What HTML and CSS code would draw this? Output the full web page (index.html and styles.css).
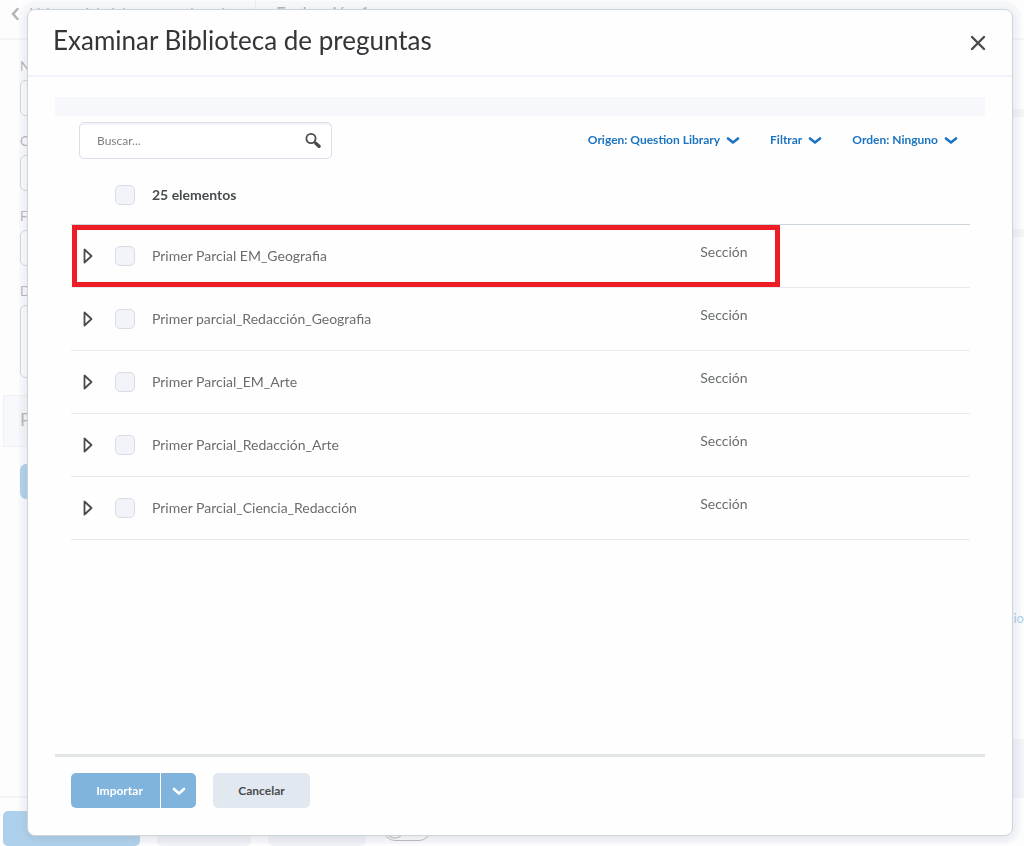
FILE: index.html
```html
<!DOCTYPE html>
<html lang="es">

<head>
    <meta charset="UTF-8">
    <meta name="viewport" content="width=device-width, initial-scale=1.0">
    <title>Examinar Biblioteca de preguntas</title>
    <link rel="stylesheet" href="styles.css">
</head>

<body>
    <!-- page behind the dialog -->
    <div class="page" inert>
        <header class="topbar">
            <a class="back" href="#">
                <svg width="8" height="16" viewBox="0 0 8 16"><path d="M6.500 3 2 8l4.500 5" fill="none" stroke="currentColor" stroke-width="2.500" stroke-linecap="round" /></svg>
                <span>Volver a Administrar cuestionarios</span>
            </a>
            <span class="topbar-title">Evaluación 1</span>
        </header>
        <div class="columns">
            <form class="form">
                <label for="f1">Nombre</label>
                <input id="f1" type="text">
                <label for="f2">Calificación</label>
                <input id="f2" type="text">
                <label for="f3">Fecha</label>
                <input id="f3" type="text">
                <label for="f4">Descripción</label>
                <textarea id="f4"></textarea>
                <h2>Preguntas</h2>
                <button class="add" type="button" aria-label="Agregar"></button>
            </form>
            <aside class="side">
                <div class="side-card small"></div>
                <div class="side-card medium"></div>
                <div class="side-card large"><a href="#">cio</a></div>
                <div class="side-end"></div>
            </aside>
        </div>
        <footer class="bottombar">
            <button class="save" type="button" aria-label="Guardar y cerrar"></button>
            <button class="plain" type="button" aria-label="Guardar"></button>
            <button class="plain wide" type="button" aria-label="Cancelar"></button>
            <input class="switch" type="checkbox" aria-label="Visibilidad">
        </footer>
    </div>

    <div class="dialog" role="dialog" aria-labelledby="dialog-title">
        <header class="dialog-header">
            <h1 id="dialog-title">Examinar Biblioteca de preguntas</h1>
            <button class="close" type="button" aria-label="Cerrar">
                <svg width="16" height="16" viewBox="0 0 16 16"><path d="M2 2l12 12M14 2 2 14" stroke="currentColor" stroke-width="2.400" stroke-linecap="round" /></svg>
            </button>
        </header>

        <div class="dialog-body">
            <div class="strip"></div>
            <div class="tools">
                <div class="search">
                    <input type="text" placeholder="Buscar..." aria-label="Buscar">
                    <button type="button" aria-label="Buscar">
                        <svg width="16" height="16" viewBox="0 0 16 16" fill="none" stroke="currentColor"><circle cx="6" cy="5.500" r="4.600" stroke-width="1.800" /><path d="M9.500 9l1.500 1.500" stroke-width="1.800" /><path d="M11 10.500l3 2.800" stroke-width="3.400" stroke-linecap="round" /></svg>
                    </button>
                </div>
                <div class="filters">
                    <button type="button">Origen: Question Library
                        <svg width="14" height="8" viewBox="0 0 14 8"><path d="M2 2.500 7 6.500l5-4" /></svg>
                    </button>
                    <button type="button">Filtrar
                        <svg width="14" height="8" viewBox="0 0 14 8"><path d="M2 2.500 7 6.500l5-4" /></svg>
                    </button>
                    <button type="button">Orden: Ninguno
                        <svg width="14" height="8" viewBox="0 0 14 8"><path d="M2 2.500 7 6.500l5-4" /></svg>
                    </button>
                </div>
            </div>

            <table class="items">
                <colgroup>
                    <col class="col-toggle">
                    <col class="col-check">
                    <col>
                    <col class="col-type">
                </colgroup>
                <thead>
                    <tr>
                        <td></td>
                        <td class="check"><input type="checkbox" id="all"></td>
                        <th colspan="2"><label for="all">25 elementos</label></th>
                    </tr>
                </thead>
                <tbody>
                    <tr class="marked">
                        <td class="toggle"><button type="button" aria-label="Expandir"><svg width="10" height="16" viewBox="0 0 10 16"><path d="M1.500 1.500v13L8.500 8z" /></svg></button></td>
                        <td class="check"><input type="checkbox" id="q1"></td>
                        <td class="name"><label for="q1">Primer Parcial EM_Geografia</label></td>
                        <td class="type">Sección</td>
                    </tr>
                    <tr>
                        <td class="toggle"><button type="button" aria-label="Expandir"><svg width="10" height="16" viewBox="0 0 10 16"><path d="M1.500 1.500v13L8.500 8z" /></svg></button></td>
                        <td class="check"><input type="checkbox" id="q2"></td>
                        <td class="name"><label for="q2">Primer parcial_Redacción_Geografia</label></td>
                        <td class="type">Sección</td>
                    </tr>
                    <tr>
                        <td class="toggle"><button type="button" aria-label="Expandir"><svg width="10" height="16" viewBox="0 0 10 16"><path d="M1.500 1.500v13L8.500 8z" /></svg></button></td>
                        <td class="check"><input type="checkbox" id="q3"></td>
                        <td class="name"><label for="q3">Primer Parcial_EM_Arte</label></td>
                        <td class="type">Sección</td>
                    </tr>
                    <tr>
                        <td class="toggle"><button type="button" aria-label="Expandir"><svg width="10" height="16" viewBox="0 0 10 16"><path d="M1.500 1.500v13L8.500 8z" /></svg></button></td>
                        <td class="check"><input type="checkbox" id="q4"></td>
                        <td class="name"><label for="q4">Primer Parcial_Redacción_Arte</label></td>
                        <td class="type">Sección</td>
                    </tr>
                    <tr>
                        <td class="toggle"><button type="button" aria-label="Expandir"><svg width="10" height="16" viewBox="0 0 10 16"><path d="M1.500 1.500v13L8.500 8z" /></svg></button></td>
                        <td class="check"><input type="checkbox" id="q5"></td>
                        <td class="name"><label for="q5">Primer Parcial_Ciencia_Redacción</label></td>
                        <td class="type">Sección</td>
                    </tr>
                </tbody>
            </table>
        </div>

        <footer class="dialog-footer">
            <div class="split">
                <button class="import" type="button">Importar</button>
                <button class="more" type="button" aria-label="Más opciones">
                    <svg width="14" height="8" viewBox="0 0 14 8"><path d="M2 2l5 4.500L12 2" /></svg>
                </button>
            </div>
            <button class="cancel" type="button">Cancelar</button>
        </footer>
    </div>
</body>

</html>
```

FILE: styles.css
```css
* {
    box-sizing: border-box;
}

html,
body {
    height: 100%;
    margin: 0;
}

body {
    overflow: hidden;
    background-color: #fdfdfe;
    color: #494c4e;
    font-family: Lato, "Liberation Sans", sans-serif;
    font-size: 14px;
}

button {
    margin: 0;
    padding: 0;
    border: none;
    background: none;
    color: inherit;
    font: inherit;
}

svg {
    display: block;
}

/* page behind the dialog */
.page {
    display: flex;
    flex-direction: column;
    height: 100vh;
    color: #b4b4b5;
}

.topbar {
    display: flex;
    height: 40px;
    border-bottom: 2px solid #f3f4f8;
}

.back {
    display: flex;
    gap: 11px;
    width: 256px;
    padding: 6px 0 0 11px;
    border-right: 1px solid #eef0f4;
    color: inherit;
    line-height: 14px;
    text-decoration: none;
}

.topbar-title {
    padding: 4px 0 0 20px;
    font-size: 17px;
    line-height: 20px;
}

.columns {
    display: flex;
    flex: 1;
    justify-content: space-between;
}

.form {
    display: flex;
    flex-direction: column;
    width: 600px;
    padding: 18px 0 0 20px;
}

.form label {
    font-size: 13px;
    line-height: 16px;
}

.form input,
.form textarea {
    width: 100%;
    height: 36px;
    margin: 6px 0 17px;
    border: 1px solid #d3d5d9;
    border-radius: 6px;
    background: #fff;
    resize: none;
}

.form textarea {
    height: 73px;
}

.form h2 {
    margin: 0 0 17px -17px;
    padding: 12px 16px 16px;
    border: 1px solid #eff0f5;
    background: #f8f9fc;
    font-size: 18px;
    font-weight: 400;
    line-height: 22px;
}

.add {
    width: 120px;
    height: 35px;
    border-radius: 6px;
    background: #acd0eb;
}

.side {
    display: flex;
    flex-direction: column;
    width: 200px;
}

.side-card {
    border-bottom: 8px solid #f3f4f9;
}

.small {
    height: 77px;
}

.medium {
    height: 120px;
}

.large {
    flex: 1;
    padding-top: 372px;
    border: none;
    text-align: right;
}

.large a {
    color: #a6cdea;
    font-size: 13px;
    line-height: 16px;
    text-decoration: none;
}

.side-end {
    height: 57px;
    background: #f3f4f9;
}

.bottombar {
    display: flex;
    gap: 17px;
    height: 50px;
    padding: 13px 0 0 3px;
    border-top: 2px solid #f3f4f8;
}

.bottombar button {
    height: 35px;
    border-radius: 5px;
}

.save {
    width: 137px;
    background: #acd0eb;
}

.plain {
    width: 94px;
    background: #f1f3f7;
}

.plain.wide {
    width: 98px;
}

.switch {
    appearance: none;
    width: 48px;
    height: 24px;
    margin: 6px 0 0;
    border: 1px solid #b8babc;
    border-radius: 12px;
    background: radial-gradient(circle at 11px 11px, #fff 8px, #b8babc 9px, #fff 10px);
}

/* dialog */
.dialog {
    position: fixed;
    top: 9px;
    right: 11px;
    bottom: 10px;
    left: 27px;
    display: flex;
    flex-direction: column;
    border: 1px solid #cdd5dc;
    border-radius: 8px;
    background: #fefefe;
    box-shadow: 0 0 0 8px rgba(195, 208, 226, 0.120), 0 2px 8px rgba(0, 0, 0, 0.100);
}

.dialog-header {
    display: flex;
    justify-content: space-between;
    align-items: center;
    height: 67px;
    padding: 0 26px 0 25px;
    border-bottom: 2px solid #f1f3f8;
}

h1 {
    margin: 0;
    padding-bottom: 6px;
    color: #333538;
    font-size: 26px;
    font-weight: 400;
    line-height: 32px;
}

.close {
    color: #494c4e;
}

.dialog-body {
    flex: 1;
    margin: 20px 27px 0;
    border-bottom: 3px solid #e2e5e5;
}

.strip {
    height: 19px;
    background: #f7f8fb;
}

.tools {
    display: flex;
    justify-content: space-between;
    padding: 6px 27px 0 24px;
}

.search {
    display: flex;
    align-items: center;
    width: 253px;
    height: 37px;
    padding: 0 10px 0 17px;
    border: 1px solid #d9dee8;
    border-radius: 5px;
    background: #fff;
    box-shadow: inset 0 2px 0 #f3f4f8;
}

.search input {
    flex: 1;
    min-width: 0;
    padding: 0;
    border: none;
    outline: none;
    background: none;
    font: 12px/20px Lato, "Liberation Sans", sans-serif;
}

.search input::placeholder {
    color: #7c7f82;
}

.filters {
    display: flex;
    gap: 30px;
    height: 35px;
}

.filters button {
    display: flex;
    align-items: center;
    gap: 6px;
    color: #1c74c0;
    font-size: 12px;
    font-weight: 700;
}

.filters path,
.more path {
    fill: none;
    stroke: currentColor;
    stroke-width: 2.600;
    stroke-linecap: round;
    stroke-linejoin: round;
}

.items {
    width: calc(100% - 31px);
    margin: 7px 0 0 16px;
    border-collapse: collapse;
    table-layout: fixed;
}

.col-toggle {
    width: 44px;
}

.col-check {
    width: 37px;
}

.col-type {
    width: 30%;
}

.items td,
.items th {
    height: 63px;
    padding: 0;
    border-bottom: 1px solid #e8eaf0;
    text-align: left;
    font-size: 14px;
    line-height: 20px;
}

.items thead td,
.items thead th {
    height: 58px;
    border-bottom-color: #cdd5dc;
}

.items .toggle {
    padding-left: 12px;
}

.items .type {
    padding-bottom: 8px;
}

.name,
.type {
    color: #6a6d70;
}

.toggle button {
    display: block;
}

.toggle path {
    fill: none;
    stroke: #494c4e;
    stroke-width: 1.800;
    stroke-linejoin: round;
}

.check input {
    display: block;
    appearance: none;
    width: 20px;
    height: 20px;
    margin: 0;
    border: 1px solid #d8dde5;
    border-radius: 5px;
    background: #f3f4f9;
}

.marked {
    position: relative;
}

/* red frame round the first section */
.marked td:last-child::after {
    content: "";
    position: absolute;
    top: 1px;
    right: 190px;
    bottom: 0;
    left: 1px;
    border: 5px solid #ee1c25;
}

.dialog-footer {
    display: flex;
    gap: 17px;
    padding: 16px 43px 27px;
    font-size: 12px;
    font-weight: 700;
}

.split {
    display: flex;
    gap: 1px;
    color: #fff;
}

.split button,
.cancel {
    height: 35px;
    background: #80b4dd;
}

.split .import {
    width: 89px;
    padding-left: 8px;
    border-radius: 5px 0 0 5px;
}

.split .more {
    display: flex;
    align-items: center;
    justify-content: center;
    width: 35px;
    border-radius: 0 5px 5px 0;
}

.cancel {
    width: 97px;
    border-radius: 5px;
    background: #e2e8f0;
}
```
